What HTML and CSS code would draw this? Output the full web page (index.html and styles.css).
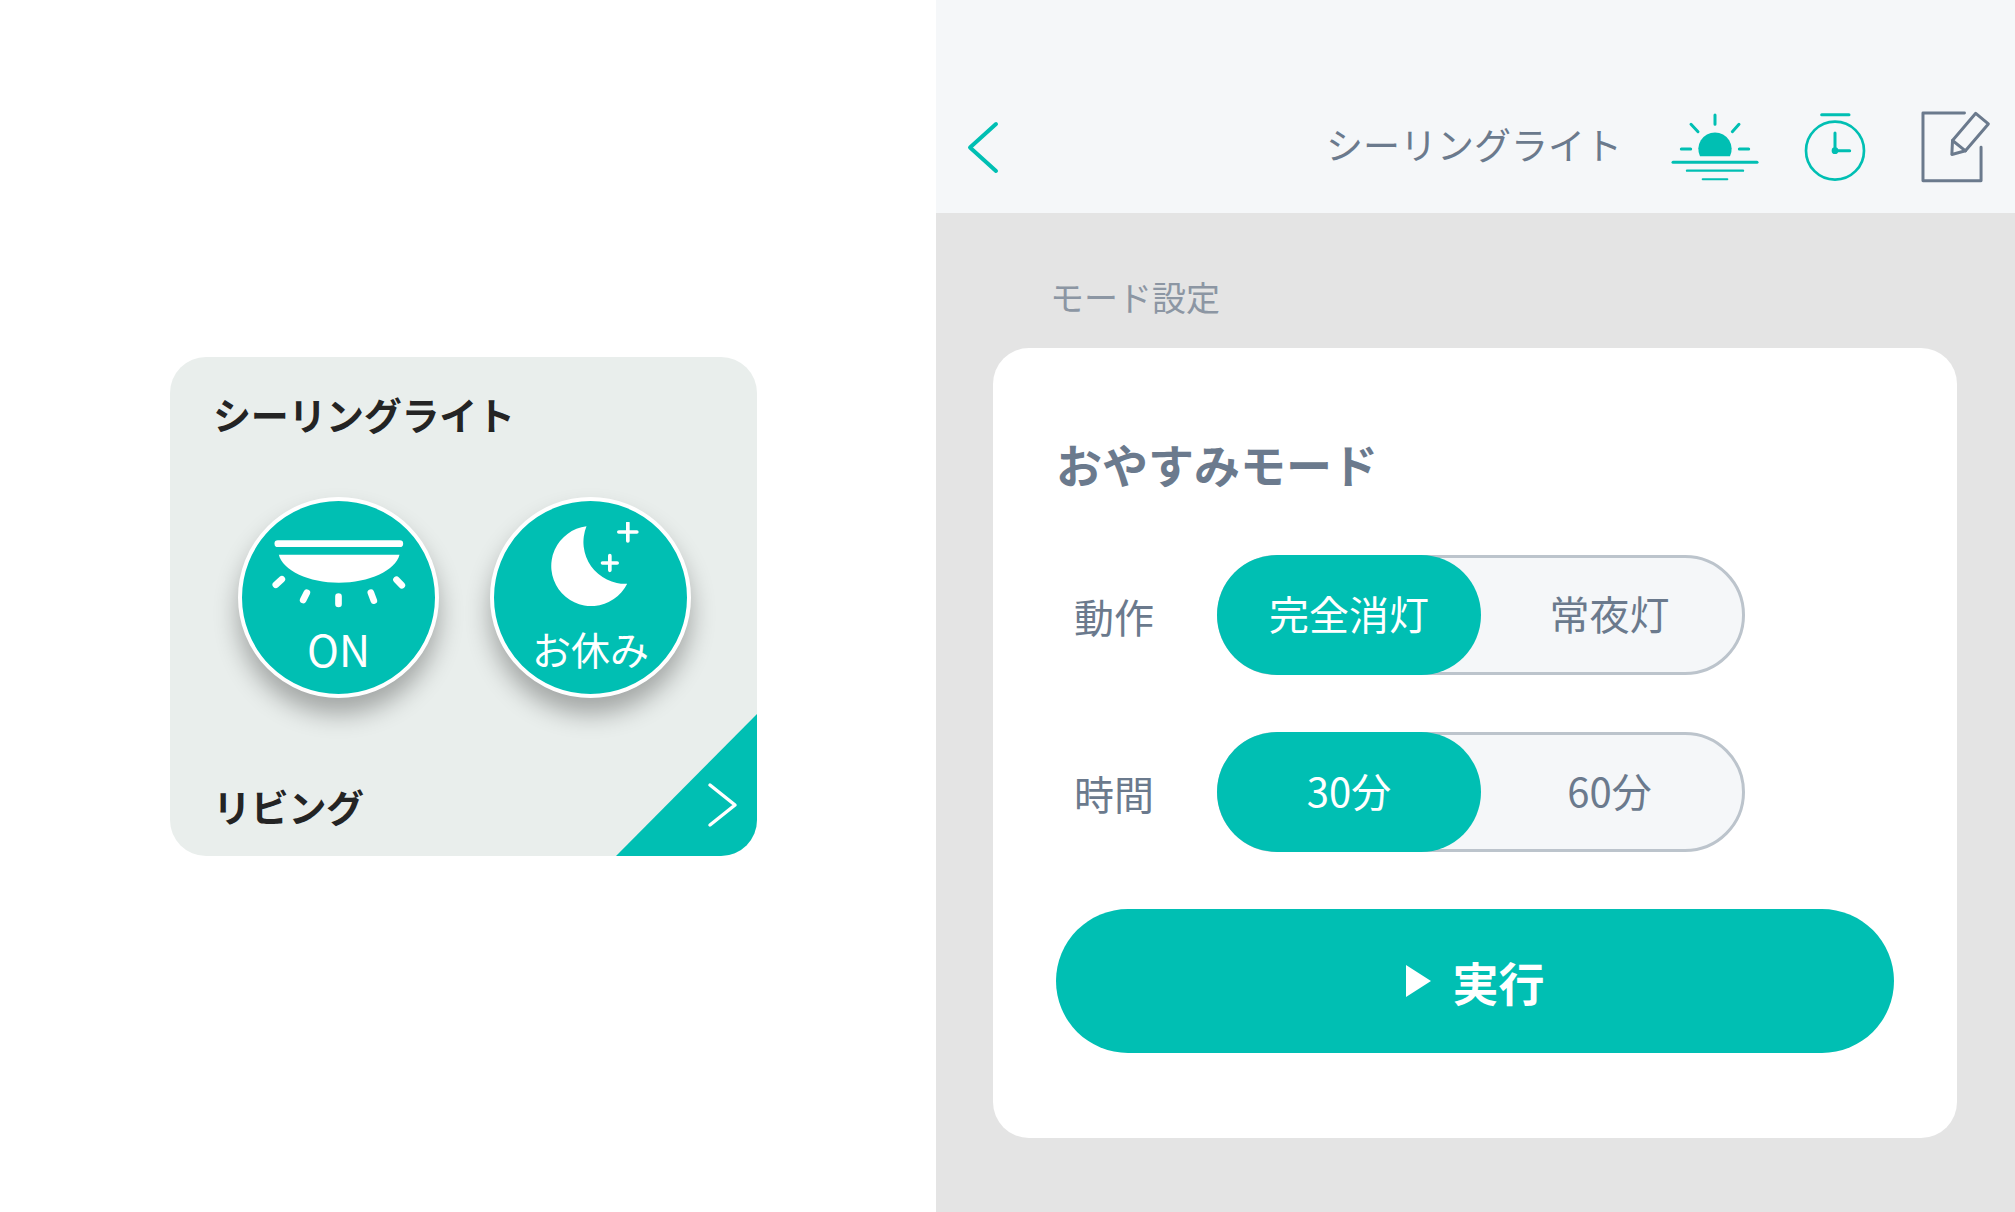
FILE: index.html
```html
<!DOCTYPE html>
<html lang="ja">
<head>
  <meta charset="UTF-8">
  <title>シーリングライト</title>
  <link rel="stylesheet" href="styles.css">
</head>
<body>
<div class="left">
  <div class="device">
    <div class="device-name">シーリングライト</div>
    <div class="device-btns">
      <div class="round-btn">
        <svg class="round-icon" viewBox="149 130 410 270">
          <path d="M172 195H538" stroke="#fff" stroke-width="20" stroke-linecap="round"/>
          <path d="M175 228H537C525 275 445 312 355 312C265 312 187 275 175 228Z" fill="#fff"/>
          <g stroke="#fff" stroke-width="20" stroke-linecap="round" fill="none">
            <path d="M166 318L184 302"/>
            <path d="M248 364L259 342"/>
            <path d="M354 354V376"/>
            <path d="M451 342L460 366"/>
            <path d="M528 303L544 320"/>
          </g>
        </svg>
        <span class="round-label on">ON</span>
      </div>
      <div class="round-btn">
        <svg class="round-icon" viewBox="155 130 410 270">
          <path d="M348 143A120 120 0 1 0 470 315A125 125 0 0 1 348 143Z" fill="#fff"/>
          <path d="M445 160H499M472 133V187M396 253H440M418 231V275" stroke="#fff" stroke-width="11" stroke-linecap="round"/>
        </svg>
        <span class="round-label">お休み</span>
      </div>
    </div>
    <div class="device-name room">リビング</div>
    <svg class="corner" viewBox="0 0 141 142">
      <polygon points="0,142 141,0 141,142" fill="#00bfb3"/>
      <path d="M94 71L119 91L94 111" fill="none" stroke="#fff" stroke-width="3.5" stroke-linecap="round" stroke-linejoin="round"/>
    </svg>
  </div>
</div>

<div class="right">
  <div class="header">
    <svg class="back" viewBox="0 0 36 60">
      <path d="M31 7L5 30.5L31 54" fill="none" stroke="#00bfb3" stroke-width="4" stroke-linecap="round" stroke-linejoin="round"/>
    </svg>
    <div class="header-title">シーリングライト</div>
    <svg class="icon-sun" viewBox="60 65 270 210">
      <path d="M150 198A50 50 0 1 1 240 198Z" fill="#00bfb3"/>
      <g stroke="#00bfb3" stroke-linecap="round" fill="none">
        <g stroke-width="9">
          <path d="M195 74V102M123 102L144 124M267 102L247 124M94 176H122M268 176H296"/>
          <path d="M69 216H321"/>
        </g>
        <path d="M111 241H279" stroke-width="7"/>
        <path d="M158 267H232" stroke-width="6"/>
      </g>
    </svg>
    <svg class="icon-clock" viewBox="460 65 195 210">
      <circle cx="556" cy="181" r="87" fill="none" stroke="#00bfb3" stroke-width="8"/>
      <path d="M516 73H598M556 128V181H600" fill="none" stroke="#00bfb3" stroke-width="9" stroke-linecap="round"/>
      <circle cx="556" cy="181" r="10" fill="#00bfb3"/>
    </svg>
    <svg class="icon-edit" viewBox="810 60 215 220">
      <g fill="none" stroke="#6b7a8d" stroke-width="9" stroke-linecap="round" stroke-linejoin="round">
        <path d="M943 69H818V273H993V172"/>
        <path d="M977 70L1015 102L946 183L905 194L907 152Z"/>
        <path d="M907 152L946 183"/>
      </g>
    </svg>
  </div>
  <div class="content">
    <div class="section-label">モード設定</div>
    <div class="card">
      <div class="card-title">おやすみモード</div>
      <div class="row">
        <div class="row-label">動作</div>
        <div class="toggle">
          <div class="opt active">完全消灯</div>
          <div class="opt">常夜灯</div>
        </div>
      </div>
      <div class="row">
        <div class="row-label">時間</div>
        <div class="toggle">
          <div class="opt active">30分</div>
          <div class="opt">60分</div>
        </div>
      </div>
      <div class="run-btn"><span class="tri"></span>実行</div>
    </div>
  </div>
</div>
</body>
</html>
```

FILE: styles.css
```css
* {
  box-sizing: border-box;
}
body {
  margin: 0;
  height: 1212px;
  overflow: hidden;
  display: flex;
  background: #fff;
  font-family: "Noto Sans CJK JP", "Noto Sans", sans-serif;
}
.left {
  width: 936px;
  padding-left: 170px;
  display: flex;
  align-items: center;
}
.device {
  position: relative;
  width: 587px;
  height: 499px;
  padding: 32px 43px;
  background: #e9eeec;
  border-radius: 36px;
  overflow: hidden;
}
.device-name {
  font-size: 38px;
  line-height: 50px;
  font-weight: 700;
  letter-spacing: -0.3px;
  color: #242424;
}
.room {
  margin-top: 83px;
}
.device-btns {
  display: flex;
  gap: 51px;
  margin: 58px 0 0 25px;
}
.round-btn {
  width: 201px;
  height: 201px;
  padding-top: 21px;
  border: 4px solid #fff;
  border-radius: 50%;
  background: #00bfb3;
  box-shadow: 0 16px 24px rgba(0, 0, 0, 0.3);
  display: flex;
  flex-direction: column;
  align-items: center;
}
.round-icon {
  width: 137px;
  height: 90px;
  flex: none;
}
.round-label {
  margin-top: 11px;
  font-size: 39px;
  line-height: 50px;
  color: #fff;
}
.on {
  font-size: 43px;
}
.corner {
  position: absolute;
  right: 0;
  bottom: 0;
  width: 141px;
  height: 142px;
}
.right {
  width: 1079px;
  background: #e4e4e4;
}
.header {
  height: 213px;
  padding: 80px 23px 0 29px;
  background: #f5f7f9;
  display: flex;
  align-items: center;
}
.back {
  width: 36px;
  height: 60px;
}
.header-title {
  margin: 0 48px 5px auto;
  font-size: 37px;
  color: #6b7a8d;
}
.icon-sun {
  width: 90px;
  height: 70px;
  margin-right: 43px;
}
.icon-clock {
  width: 65px;
  height: 70px;
  margin-right: 52px;
}
.icon-edit {
  width: 72px;
  height: 73px;
}
.content {
  padding: 59px 0 0 57px;
}
.section-label {
  margin-left: 57px;
  font-size: 34px;
  line-height: 50px;
  color: #8c96a3;
}
.card {
  width: 964px;
  height: 790px;
  margin-top: 26px;
  padding: 85px 63px 0;
  background: #fff;
  border-radius: 36px;
}
.card-title {
  font-size: 46px;
  line-height: 60px;
  font-weight: 700;
  color: #6b7a8d;
  margin-bottom: 62px;
}
.row {
  display: flex;
  align-items: center;
  margin-bottom: 57px;
}
.row-label {
  width: 161px;
  padding-left: 18px;
  padding-top: 2px;
  font-size: 40px;
  color: #6b7a8d;
}
.toggle {
  width: 528px;
  height: 120px;
  display: grid;
  grid-template-columns: 261px 261px;
  background: #f5f7f9;
  border: 3px solid #bcc4cc;
  border-radius: 60px;
}
.opt {
  margin: -3px 0;
  padding: 0 4px 4px 0;
  display: flex;
  justify-content: center;
  align-items: center;
  font-size: 40px;
  color: #6b7a8d;
  border-radius: 60px;
}
.active {
  margin-left: -3px;
  padding-right: 0;
  background: #00bfb3;
  color: #fff;
}
.run-btn {
  width: 838px;
  height: 144px;
  margin-top: 1px;
  display: flex;
  justify-content: center;
  align-items: center;
  gap: 22px;
  font-size: 46px;
  font-weight: 700;
  color: #fff;
  background: #00bfb3;
  border-radius: 72px;
}
.tri {
  width: 0;
  height: 0;
  border-left: 25px solid #fff;
  border-top: 16px solid transparent;
  border-bottom: 16px solid transparent;
}
```
